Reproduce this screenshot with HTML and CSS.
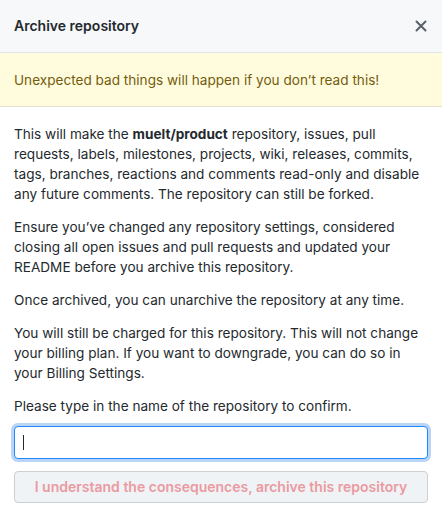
FILE: index.html
```html
<!DOCTYPE html>
<html lang="en">
<head>
<meta charset="utf-8">
<title>Archive repository</title>
<link rel="stylesheet" href="styles.css">
</head>
<body>
<div class="dialog">
  <div class="dialog-header">
    <h3 class="dialog-title">Archive repository</h3>
    <button class="close-btn" aria-label="Close">
      <svg width="12" height="12" viewBox="0 0 12 12" aria-hidden="true">
        <path d="M1.5 1.5 L10.5 10.5 M10.5 1.5 L1.5 10.5" stroke="currentColor" stroke-width="2" stroke-linecap="round"/>
      </svg>
    </button>
  </div>
  <div class="flash-warn">Unexpected bad things will happen if you don’t read this!</div>
  <div class="dialog-body">
    <p>This will make the <strong>muelt/product</strong> repository, issues, pull requests, labels, milestones, projects, wiki, releases, commits, tags, branches, reactions and comments read-only and disable any future comments. The repository can still be forked.</p>
    <p>Ensure you’ve changed any repository settings, considered closing all open issues and pull requests and updated your README before you archive this repository.</p>
    <p>Once archived, you can unarchive the repository at any time.</p>
    <p>You will still be charged for this repository. This will not change your billing plan. If you want to downgrade, you can do so in your Billing Settings.</p>
    <p class="confirm-label">Please type in the name of the repository to confirm.</p>
    <div class="input-wrap">
      <input class="form-control" type="text" aria-label="Repository name">
      <span class="caret"></span>
    </div>
    <button class="btn-danger" disabled>I understand the consequences, archive this repository</button>
  </div>
</div>
</body>
</html>
```
FILE: styles.css
```css
html, body {
  margin: 0;
  padding: 0;
  background: #ffffff;
}
body {
  font-family: Inter, "Noto Sans", "Liberation Sans", sans-serif;
  font-size: 13.6px;
  line-height: 20px;
  color: #24292e;
}
.dialog {
  width: 442px;
  min-height: 520px;
  display: flex;
  flex-direction: column;
}
.dialog-header {
  height: 53px;
  box-sizing: border-box;
  background: #f6f8fa;
  border-bottom: 1px solid #e1e4e8;
  display: flex;
  align-items: center;
  justify-content: space-between;
  padding: 0 14px;
}
.dialog-title {
  margin: 0;
  font-size: 14px;
  font-weight: 600;
  line-height: 20px;
}
.close-btn {
  border: 0;
  background: transparent;
  padding: 0;
  margin: 0 1px 0 0;
  width: 12px;
  height: 12px;
  color: #586069;
  display: flex;
}
.flash-warn {
  height: 54px;
  box-sizing: border-box;
  background: #fffbdd;
  color: #735c0f;
  border-bottom: 1px solid #e4e2cf;
  padding: 0 14px;
  display: flex;
  align-items: center;
}
.dialog-body {
  padding: 17px 14px 16px;
  display: flex;
  flex-direction: column;
}
.dialog-body p {
  margin: 0 0 13px;
}
.dialog-body p.confirm-label {
  margin-bottom: 10px;
}
.dialog-body strong {
  font-weight: 650;
}
.input-wrap {
  position: relative;
}
.form-control {
  display: block;
  width: 100%;
  box-sizing: border-box;
  height: 33px;
  border: 1px solid #2188ff;
  border-radius: 4px;
  box-shadow: 0 0 0 3px rgba(3, 102, 214, 0.28);
  outline: none;
  font: inherit;
  padding: 0 8px;
  caret-color: transparent;
}
.caret {
  position: absolute;
  left: 9px;
  top: 9px;
  width: 1px;
  height: 15px;
  background: #24292e;
}
.btn-danger {
  margin-top: 12px;
  height: 32px;
  box-sizing: border-box;
  width: 100%;
  border: 1px solid #cdd0d3;
  border-radius: 4px;
  background: #eff3f6;
  color: #eb9aa1;
  font: inherit;
  font-size: 14px;
  font-weight: 600;
  padding: 0 10px;
}
```
